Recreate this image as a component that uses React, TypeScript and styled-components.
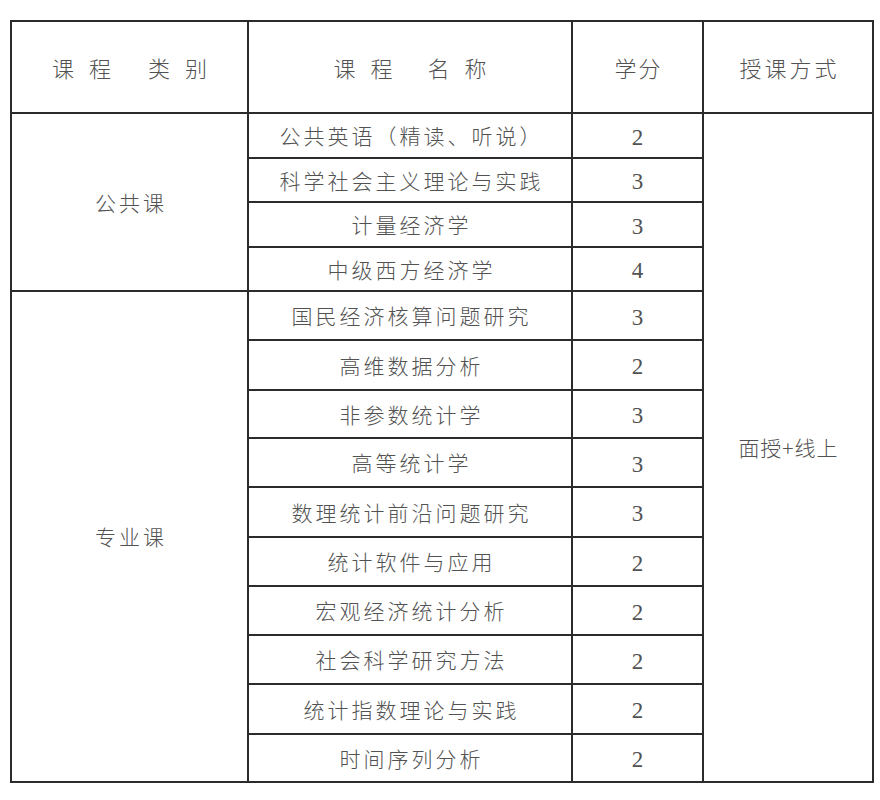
import React from 'react';
import styled, { createGlobalStyle } from 'styled-components';

const GlobalStyle = createGlobalStyle`
  html, body {
    margin: 0;
    padding: 0;
    background: #ffffff;
  }
  body {
    font-family: "Noto Sans CJK SC", "Noto Sans", sans-serif;
  }
`;

const Page = styled.div`
  padding: 20px 0 0 10px;
`;

const Table = styled.table`
  width: 862px;
  border-collapse: collapse;
  table-layout: fixed;
  border: 2px solid #2b2b2b;
`;

const HeadRow = styled.tr`
  height: 92px;
`;

const Row = styled.tr<{ $h: number }>`
  height: ${(p) => p.$h}px;
`;

const Cell = styled.td<{ $spacing?: number }>`
  border: 2px solid #2b2b2b;
  padding: 0;
  text-align: center;
  vertical-align: middle;
  color: #525252;
  font-family: "Noto Sans CJK SC", "Noto Sans", sans-serif;
  font-weight: 300;
  font-size: 21px;
  line-height: 1;
  letter-spacing: ${(p) => p.$spacing ?? 3}px;
  text-indent: ${(p) => p.$spacing ?? 3}px;
  white-space: nowrap;
`;

const HeadCell = styled(Cell)`
  font-size: 22px;
`;

const Gap = styled.span<{ $w: number }>`
  display: inline-block;
  width: ${(p) => p.$w}px;
`;

const Credit = styled(Cell)`
  font-family: "Liberation Serif", "DejaVu Serif", serif;
  font-size: 23px;
  letter-spacing: 0;
  text-indent: 0;
  padding-top: 3px;
`;

type Course = { name: string; credit: number; h: number };

const publicCourses: Course[] = [
  { name: '公共英语（精读、听说）', credit: 2, h: 45 },
  { name: '科学社会主义理论与实践', credit: 3, h: 44 },
  { name: '计量经济学', credit: 3, h: 45 },
  { name: '中级西方经济学', credit: 4, h: 44 },
];

const majorCourses: Course[] = [
  { name: '国民经济核算问题研究', credit: 3, h: 49 },
  { name: '高维数据分析', credit: 2, h: 50 },
  { name: '非参数统计学', credit: 3, h: 48 },
  { name: '高等统计学', credit: 3, h: 49 },
  { name: '数理统计前沿问题研究', credit: 3, h: 50 },
  { name: '统计软件与应用', credit: 2, h: 49 },
  { name: '宏观经济统计分析', credit: 2, h: 49 },
  { name: '社会科学研究方法', credit: 2, h: 49 },
  { name: '统计指数理论与实践', credit: 2, h: 50 },
  { name: '时间序列分析', credit: 2, h: 48 },
];

const total = publicCourses.length + majorCourses.length;

export default function App() {
  return (
    <Page>
      <GlobalStyle />
      <Table>
        <colgroup>
          <col style={{ width: 237 }} />
          <col style={{ width: 324 }} />
          <col style={{ width: 131 }} />
          <col style={{ width: 170 }} />
        </colgroup>
        <thead>
          <HeadRow>
            <HeadCell $spacing={15}>
              课程<Gap $w={22} />类别
            </HeadCell>
            <HeadCell $spacing={15}>
              课程<Gap $w={20} />名称
            </HeadCell>
            <HeadCell $spacing={2}>学分</HeadCell>
            <HeadCell $spacing={3}>授课方式</HeadCell>
          </HeadRow>
        </thead>
        <tbody>
          {publicCourses.map((c, i) => (
            <Row key={c.name} $h={c.h}>
              {i === 0 && (
                <Cell rowSpan={publicCourses.length} $spacing={3}>
                  公共课
                </Cell>
              )}
              <Cell>{c.name}</Cell>
              <Credit>{c.credit}</Credit>
              {i === 0 && (
                <Cell rowSpan={total} $spacing={1}>
                  面授+线上
                </Cell>
              )}
            </Row>
          ))}
          {majorCourses.map((c, i) => (
            <Row key={c.name} $h={c.h}>
              {i === 0 && (
                <Cell rowSpan={majorCourses.length} $spacing={3}>
                  专业课
                </Cell>
              )}
              <Cell>{c.name}</Cell>
              <Credit>{c.credit}</Credit>
            </Row>
          ))}
        </tbody>
      </Table>
    </Page>
  );
}
